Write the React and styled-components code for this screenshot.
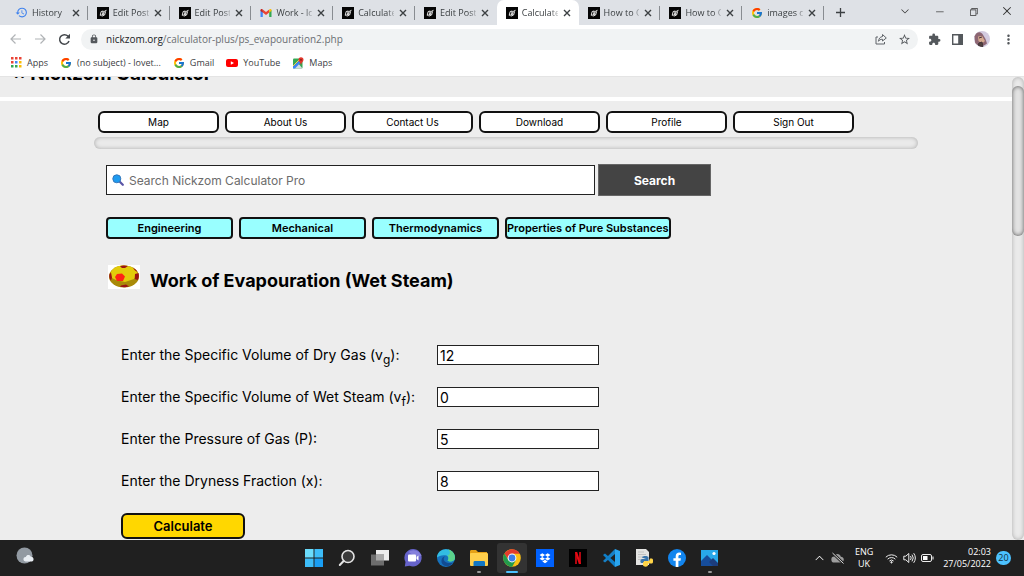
import React from 'react'
import styled, { createGlobalStyle } from 'styled-components'
import { MdExtension, MdHistory, MdLock, MdMoreVert, MdStarBorder } from 'react-icons/md'
import { FcGoogle } from 'react-icons/fc'
import { VscChromeMinimize, VscChromeRestore, VscChromeClose, VscChevronDown, VscChevronUp } from 'react-icons/vsc'

const tabs = [
    { icon: 'history', title: 'History' },
    { icon: 'nickzom', title: 'Edit Post' },
    { icon: 'nickzom', title: 'Edit Post' },
    { icon: 'gmail', title: 'Work - lo' },
    { icon: 'nickzom', title: 'Calculate' },
    { icon: 'nickzom', title: 'Edit Post' },
    { icon: 'nickzom', title: 'Calculate', active: true },
    { icon: 'nickzom', title: 'How to C' },
    { icon: 'nickzom', title: 'How to C' },
    { icon: 'google', title: 'images o' },
]

const bookmarks = [
    { icon: 'apps', title: 'Apps' },
    { icon: 'google', title: '(no subject) - lovet...' },
    { icon: 'google', title: 'Gmail' },
    { icon: 'youtube', title: 'YouTube' },
    { icon: 'maps', title: 'Maps' },
]

const menu = ['Map', 'About Us', 'Contact Us', 'Download', 'Profile', 'Sign Out']
const crumbs = ['Engineering', 'Mechanical', 'Thermodynamics', 'Properties of Pure Substances']

const fields = [
    { id: 'vg', label: <>Enter the Specific Volume of Dry Gas (v<sub>g</sub>):</>, value: '12' },
    { id: 'vf', label: <>Enter the Specific Volume of Wet Steam (v<sub>f</sub>):</>, value: '0' },
    { id: 'p', label: 'Enter the Pressure of Gas (P):', value: '5' },
    { id: 'x', label: 'Enter the Dryness Fraction (x):', value: '8' },
]

const apps = [
    { name: 'Start', icon: 'windows' },
    { name: 'Search', icon: 'search' },
    { name: 'Task View', icon: 'taskview' },
    { name: 'Chat', icon: 'chat' },
    { name: 'Edge', icon: 'edge' },
    { name: 'File Explorer', icon: 'explorer', state: 'open' },
    { name: 'Chrome', icon: 'chrome', state: 'active' },
    { name: 'Dropbox', icon: 'dropbox' },
    { name: 'Netflix', icon: 'netflix' },
    { name: 'Visual Studio Code', icon: 'vscode' },
    { name: 'Python', icon: 'python' },
    { name: 'Facebook', icon: 'facebook' },
    { name: 'Photos', icon: 'photos', state: 'open' },
]

const SmallIcon = ({ name }) => {
    switch (name) {
        case 'history':
            return <MdHistory size={13} color="#3f82ee" />
        case 'google':
            return <FcGoogle size={12} />
        case 'nickzom':
            return (
                <svg width="12" height="12" viewBox="0 0 12 12">
                    <rect width="12" height="12" fill="#050505" />
                    <path d="M3.2 8.3 4.2 4.5 6.3 4 5.3 8ZM6.2 8 7.3 4.3 9.5 3.3M4.8 9.2 7.6 8 8.6 4.4" fill="none" stroke="#fff" strokeWidth="0.9" />
                </svg>
            )
        case 'gmail':
            return (
                <svg width="12" height="12" viewBox="0 0 12 12">
                    <path d="M.5 3v7h2.3V4.5Z" fill="#4285f4" />
                    <path d="M9.2 4.5V10h2.3V3Z" fill="#34a853" />
                    <path d="M2.8 2.6 6 5l3.2-2.4v3L6 8 2.8 5.6Z" fill="#ea4335" />
                    <path d="M.5 3.2C.5 1.7 1.8 1.6 2.8 2.4v3.2L.5 4Z" fill="#c5221f" />
                    <path d="M11.5 3.2c0-1.500-1.300-1.600-2.300-.8v3.200l2.300-1.600Z" fill="#fbbc04" />
                </svg>
            )
        case 'apps':
            return (
                <svg width="11" height="11" viewBox="0 0 11 11">
                    <path d="M0 0h2.500v2.500H0zM4 0h2.500v2.500H4zM8 0h2.500v2.500H8zM0 4h2.500v2.500H0z" fill="#ea4335" />
                    <path d="M4 4h2.500v2.500H4z" fill="#4285f4" />
                    <path d="M8 4h2.500v2.500H8zM8 8h2.500v2.500H8z" fill="#fbbc04" />
                    <path d="M0 8h2.500v2.500H0zM4 8h2.500v2.500H4z" fill="#34a853" />
                </svg>
            )
        case 'youtube':
            return (
                <svg width="12" height="12" viewBox="0 0 12 12">
                    <rect y="2" width="12" height="8" rx="2" fill="#f00" />
                    <path d="M4.8 4.2v3.600L8 6Z" fill="#fff" />
                </svg>
            )
        default:
            return (
                <svg width="12" height="12" viewBox="0 0 12 12">
                    <rect x="1" y="1.5" width="9.5" height="10" rx="1" fill="#34a853" />
                    <path d="M1.5 11.5 6 6l4.500 5.500Z" fill="#d8dce0" />
                    <path d="M1 9.5 9 2l1.500 1.500L3 11.500H1Z" fill="#4285f4" />
                    <path d="M1 9 8 2" stroke="#fbd04b" />
                    <path d="M9 .3a2.500 2.500 0 0 0-2.500 2.500C6.500 4.500 8.500 5.500 9 8c.5-2.500 2.500-3.500 2.500-5.200A2.500 2.500 0 0 0 9 .3Z" fill="#e5352b" />
                    <circle cx="9" cy="2.8" r=".9" fill="#7b1f16" />
                </svg>
            )
    }
}

const appArt = {
    windows: (
        <>
            <path d="M0 0h8.500v8.500H0z" fill="#6bdcfb" />
            <path d="M9.500 0H18v8.500H9.500zM0 9.500h8.500V18H0z" fill="#3dbdf8" />
            <path d="M9.500 9.500H18V18H9.500z" fill="#199ef3" />
        </>
    ),
    search: (
        <>
            <circle cx="10" cy="7.5" r="6" fill="#3b3b3b" stroke="#e4e4e4" strokeWidth="1.6" />
            <path d="M5.6 12 1.8 16" stroke="#e4e4e4" strokeWidth="2" strokeLinecap="round" />
        </>
    ),
    taskview: (
        <>
            <rect x="5" y="1" width="13" height="10.5" fill="#ededed" />
            <rect x="0" y="5.5" width="13" height="11" fill="#6d6d6d" />
            <rect x="5" y="5.5" width="8" height="6" fill="#a8a8a8" />
        </>
    ),
    chat: (
        <>
            <path d="M9 0a8.700 8.700 0 1 1-3.500 16.700L.8 17.500 1.500 13A8.700 8.700 0 0 1 9 0Z" fill="#6663ca" />
            <path d="M4.500 3A8.500 8.500 0 0 1 17.500 7L12 8Z" fill="#8580dc" />
            <rect x="4" y="5.5" width="8" height="7" rx="1" fill="#fff" />
            <path d="m12.500 8 2-1.500v5l-2-1.500Z" fill="#fff" />
        </>
    ),
    edge: (
        <>
            <circle cx="9" cy="9" r="9" fill="#1672bd" />
            <path d="M0 8.500C.5-2.500 17.500-2.500 18 8.800c0 4-5.500 4.600-7.400 2.600 1.500-1.900 1-4.900-2.400-5.200C4.500 5.900 1.500 7 0 8.500Z" fill="#32bce2" />
            <path d="M10.500.2C15 1 18 4.500 18 8.800c0 4-5.500 4.600-7.400 2.600 1.700-2.200.8-4-.6-4.800C14 5.500 13.500 2 10.500.2Z" fill="#5bd38b" />
            <path d="M8.200 7.500C5 9.500 7 15.500 16 13.800 12 19.500 4 17.500 4.500 11.500 4.700 9 6.500 7.600 8.200 7.500Z" fill="#124b91" />
        </>
    ),
    explorer: (
        <>
            <path d="M0 2.500C0 1.500.6 1 1.500 1H6l2 2h9v5H0Z" fill="#e5a116" />
            <rect y="4" width="18" height="13" rx="1" fill="#ffcf4b" />
            <path d="M3.500 17v-3.500c0-1 .5-1.500 1.500-1.500h8.500c1 0 1.500.5 1.500 1.500V17Z" fill="#1277c4" />
        </>
    ),
    chrome: (
        <>
            <circle cx="9" cy="9" r="8.8" fill="#fbc116" />
            <path d="M1.400 4.600a8.800 8.800 0 0 1 15.300.1H9L5.400 11Z" fill="#e33b2e" />
            <path d="M1.400 4.600A8.800 8.800 0 0 0 9.200 17.800L13 11 9 13l-3.600-2Z" fill="#229a4c" />
            <circle cx="9" cy="9" r="4.4" fill="#fff" />
            <circle cx="9" cy="9" r="3.4" fill="#3c7de8" />
        </>
    ),
    dropbox: (
        <>
            <rect width="18" height="18" fill="#0061fe" />
            <path d="m6.300 4.300 2.700 1.800-2.700 1.800-2.700-1.800Zm5.400 0 2.700 1.800-2.700 1.800L9 6.100ZM6.300 7.900 9 9.700l-2.700 1.800-2.700-1.800Zm5.400 0 2.700 1.800-2.700 1.800L9 9.700ZM9 10.700l2.700 1.800L9 14.300l-2.700-1.800Z" fill="#fff" />
        </>
    ),
    netflix: (
        <>
            <rect width="18" height="18" fill="#000" />
            <path d="M7 15V3M11 15V3" stroke="#b20710" strokeWidth="2" />
            <path d="M6 3h2.200l3.800 12H9.800Z" fill="#e50914" />
        </>
    ),
    vscode: (
        <>
            <path d="m13 0 5 2v14l-5 2Z" fill="#2aa5ee" />
            <path d="M13 0v5L3 13.500 1 12Z" fill="#1780c6" />
            <path d="M1 6l2-1.500L13 13v5Z" fill="#0f7fc9" />
        </>
    ),
    python: (
        <>
            <path d="M1 0h10l3 3v13H1Z" fill="#e4e4e2" />
            <path d="M3 3h6M3 5.500h8M3 8h5M3 10.500h3" stroke="#c2c2c2" />
            <path d="M7 8.500C7 6.500 13.500 6.500 13.500 8.500V12H9v2H6.500C5 14 5 10 7 10h4Z" fill="#3a75ab" />
            <path d="M17 9.500c1.800 1 1.500 5-.5 5H13V16c0 2.500-5 2-5 0v-2.500l1.500-1.500h4.500l1-2.500Z" fill="#ffd447" />
        </>
    ),
    facebook: (
        <>
            <circle cx="9" cy="9" r="9" fill="#1285ee" />
            <path d="M7.700 18v-6.200H5.400V9.200h2.300V7.300c0-2.500 1.500-3.700 3.500-3.700l1.800.2V6h-1.100c-1.200 0-1.500.6-1.500 1.400v1.800h2.500l-.4 2.600h-2.100V18Z" fill="#fff" />
        </>
    ),
    photos: (
        <>
            <rect y="1" width="17" height="16" fill="#28a8ea" />
            <path d="M0 12 6 6l11 11H0Z" fill="#164d9b" />
            <path d="m8 13 4-4 5 5v3h-5Z" fill="#1c3d7d" />
            <circle cx="13" cy="4.5" r="1.6" fill="#fff" />
        </>
    ),
}

const App = () => {
    return (
        <Desktop>
            <GlobalStyle />
            <TabStrip>
                <TabList>
                    {tabs.map((tab, i) => (
                        <Tab key={i} $active={tab.active} $divider={!tab.active && !tabs[i + 1]?.active}>
                            <SmallIcon name={tab.icon} />
                            <TabTitle>{tab.title}</TabTitle>
                            <TabButton aria-label="Close tab"><Cross /></TabButton>
                        </Tab>
                    ))}
                </TabList>
                <NewTab aria-label="New tab">
                    <svg width="11" height="11" viewBox="0 0 11 11"><path d="M5.500 1v9M1 5.500h9" stroke="#3c4043" strokeWidth="1.3" /></svg>
                </NewTab>
                <WindowControls>
                    <IconButton aria-label="Search tabs"><VscChevronDown size={12} /></IconButton>
                    <IconButton aria-label="Minimize"><VscChromeMinimize size={11} /></IconButton>
                    <IconButton aria-label="Restore"><VscChromeRestore size={11} /></IconButton>
                    <IconButton aria-label="Close"><VscChromeClose size={12} /></IconButton>
                </WindowControls>
            </TabStrip>

            <Toolbar>
                <NavButtons>
                    <IconButton aria-label="Back"><Arrow /></IconButton>
                    <IconButton aria-label="Forward"><Arrow forward /></IconButton>
                    <IconButton aria-label="Reload">
                        <svg width="13" height="13" viewBox="0 0 13 13">
                            <path d="M11 8A4.800 4.800 0 1 1 9.900 3.100L11 4.200" fill="none" stroke="#45494d" strokeWidth="1.5" />
                            <path d="M12 .8v4.700H7.300Z" fill="#45494d" />
                        </svg>
                    </IconButton>
                </NavButtons>
                <AddressBar>
                    <MdLock size={10} />
                    <Address href="#">nickzom.org<span>/calculator-plus/ps_evapouration2.php</span></Address>
                    <IconButton aria-label="Share">
                        <svg width="12" height="12" viewBox="0 0 12 12" fill="none" stroke="#5f6368">
                            <path d="M3 4H1v7h8.500V9" />
                            <path d="M7.500 1.500 11.300 5 7.500 8V6.300C5.500 6.200 4.300 7 3.500 8.300 3.800 5.500 5 4 7.500 3.500Z" />
                        </svg>
                    </IconButton>
                    <IconButton aria-label="Bookmark this page"><MdStarBorder size={13} /></IconButton>
                </AddressBar>
                <Extensions>
                    <IconButton aria-label="Extensions"><MdExtension size={13} /></IconButton>
                    <IconButton aria-label="Side panel">
                        <svg width="11" height="11" viewBox="0 0 11 11"><path d="M0 0h11v11H0Zm1.400 1.400v8.200h4.800V1.400Z" fill="#54585c" fillRule="evenodd" /></svg>
                    </IconButton>
                    <IconButton aria-label="Profile">
                        <svg width="16" height="16" viewBox="0 0 16 16">
                            <circle cx="8" cy="8" r="8" fill="#d3cbe0" />
                            <path d="M.5 5.500C2 1 6 0 8.500 3l3 5 1.500 4.500A8 8 0 0 1 1.200 12Z" fill="#8d6672" />
                            <path d="M4 5.500 8 5l3 5-3 2.500L4.500 10Z" fill="#d6aa90" />
                            <path d="m5 12 3-1 1 4.500a8 8 0 0 1-5-1.500ZM5 7l3-1" fill="#51413f" stroke="#43353a" />
                        </svg>
                    </IconButton>
                    <IconButton aria-label="Menu"><MdMoreVert size={15} /></IconButton>
                </Extensions>
            </Toolbar>

            <Bookmarks>
                {bookmarks.map((mark) => (
                    <Bookmark key={mark.title} href="#"><SmallIcon name={mark.icon} />{mark.title}</Bookmark>
                ))}
            </Bookmarks>

            <Viewport>
                <Page>
                    <SiteHeader><h1>:: Nickzom Calculator</h1></SiteHeader>
                    <Menu>
                        {menu.map((item) => <MenuButton key={item}>{item}</MenuButton>)}
                    </Menu>
                    <Groove />
                    <Content>
                        <SearchForm onSubmit={(e) => e.preventDefault()}>
                            <SearchBox>
                                <svg width="12" height="12" viewBox="0 0 12 12">
                                    <path d="m7.500 7.500 3.300 3.300" stroke="#5b55a6" strokeWidth="2.2" strokeLinecap="round" />
                                    <circle cx="4.8" cy="4.8" r="4" fill="#1d9bf0" stroke="#3577bb" />
                                </svg>
                                <input type="search" aria-label="Search" placeholder="Search Nickzom Calculator Pro" />
                            </SearchBox>
                            <SearchButton type="submit">Search</SearchButton>
                        </SearchForm>
                        <Crumbs>
                            {crumbs.map((crumb) => <Crumb key={crumb}>{crumb}</Crumb>)}
                        </Crumbs>
                        <Title>
                            <svg width="32" height="24" viewBox="0 0 32 24">
                                <rect width="32" height="24" fill="#fff" />
                                <ellipse cx="16" cy="11.5" rx="15" ry="11" fill="#a98a08" />
                                <path d="M2 9C4 3 9 .5 16 .5S28 4 30 9l-4 5-9 3-9-2-6-3Z" fill="#e3cb0a" />
                                <path d="M12 1.200C14 .3 18 .3 20 1l-3 2h-3ZM25 3c2.500 1 4 2.500 4.500 4L27 5.500ZM1.500 9 3 7.500l1 5-1 3C1.500 14 .8 11.500 1.500 9ZM27 9l3.500-1c.8 3 .3 5-.8 7l-3-1ZM13 20.500l5-1 3 2c-4 1-6 .8-9 .2Z" fill="#9b1414" />
                                <path d="m7 12 2-3 5-.5 3 3-2 4.500H9Z" fill="#ff2315" />
                            </svg>
                            <h2>Work of Evapouration (Wet Steam)</h2>
                        </Title>
                        <Form onSubmit={(e) => e.preventDefault()}>
                            {fields.map((field) => (
                                <Field key={field.id}>
                                    <label htmlFor={field.id}>{field.label}</label>
                                    <input id={field.id} type="text" defaultValue={field.value} />
                                </Field>
                            ))}
                            <Calculate type="submit">Calculate</Calculate>
                        </Form>
                    </Content>
                </Page>
                <ScrollTrack><ScrollThumb /></ScrollTrack>
            </Viewport>

            <Taskbar>
                <Weather aria-label="Weather">
                    <svg width="18" height="18" viewBox="0 0 18 18">
                        <circle cx="8.5" cy="8.5" r="8" fill="#929aa2" />
                        <path d="M9.500 14.500a2 2 0 0 1 .3-4.500c.8-3 4.500-2.500 5-.3 3.200-.4 3.700 4.300 1 4.800Z" fill="#e9eef3" />
                    </svg>
                </Weather>
                <Apps>
                    {apps.map((app) => (
                        <AppButton key={app.name} aria-label={app.name} $state={app.state}>
                            <svg width="18" height="18" viewBox="0 0 18 18">{appArt[app.icon]}</svg>
                        </AppButton>
                    ))}
                </Apps>
                <Tray>
                    <VscChevronUp size={13} />
                    <svg width="14" height="12" viewBox="0 0 14 12">
                        <path d="M3.500 10.500a3 3 0 0 1-.3-6C4.500 1 9 1.500 9.800 4.800c3.500 0 4.200 5 .7 5.700Z" fill="#9d9d9d" />
                        <path d="m1.500 1 11 10.500" stroke="#202020" strokeWidth="2.5" />
                        <path d="m1.500 1 11 10.500" stroke="#ddd" />
                    </svg>
                    <Language><span>ENG</span><span>UK</span></Language>
                    <svg width="13" height="11" viewBox="0 0 13 11" fill="none" stroke="#eee">
                        <path d="M.8 4.200a8 8 0 0 1 11.400 0M2.600 6.200a5.500 5.500 0 0 1 7.800 0M4.400 8a3 3 0 0 1 4.200 0" />
                        <circle cx="6.5" cy="9.3" r=".7" fill="#eee" />
                    </svg>
                    <svg width="13" height="12" viewBox="0 0 13 12" fill="none" stroke="#eee">
                        <path d="M.8 4.200h2L5.800 1.500v9L2.800 7.800h-2ZM7.500 4q1.400 2 0 4M9 2.600q2.500 3.400 0 6.800M10.700 1.200q3.300 4.800 0 9.600" />
                    </svg>
                    <svg width="13" height="10" viewBox="0 0 13 10">
                        <rect x=".5" y="1.5" width="10" height="7" rx="1.5" fill="none" stroke="#eee" />
                        <path d="M2 3h4.500v4H2zM11.500 3.500h1v3h-1z" fill="#fff" />
                    </svg>
                    <Clock><span>02:03</span><span>27/05/2022</span></Clock>
                    <Badge>20</Badge>
                </Tray>
            </Taskbar>
        </Desktop>
    )
}

const Cross = () => (
    <svg width="8" height="8" viewBox="0 0 8 8"><path d="m1 1 6 6m0-6L1 7" stroke="#3c4043" strokeWidth="1.4" /></svg>
)

const Arrow = ({ forward }) => (
    <svg width="12" height="12" viewBox="0 0 12 12">
        <path d={forward ? 'M1 6h10M6.500 1.500 11 6l-4.500 4.500' : 'M11 6H1m4.500-4.500L1 6l4.500 4.500'} fill="none" stroke="#b0b3b6" strokeWidth="1.2" />
    </svg>
)

const GlobalStyle = createGlobalStyle`
  * {
    box-sizing: border-box;
  }
  body {
    margin: 0;
    font-family: "Open Sans", sans-serif;
    font-size: 9px;
    color: #3c4043;
  }
  button, input {
    font-family: inherit;
  }
  svg {
    display: block;
    flex-shrink: 0;
  }
`;

const Desktop = styled.div`
  display: flex;
  flex-direction: column;
  height: 100vh;
  overflow: hidden;
  background: #fff;
`;

const IconButton = styled.button`
  display: flex;
  align-items: center;
  justify-content: center;
  padding: 0;
  border: 0;
  background: none;
  color: #54585c;
`;

const TabStrip = styled.div`
  display: flex;
  flex-shrink: 0;
  height: 25px;
  background: #dee1e6;
`;

const TabList = styled.div`
  display: flex;
  flex: 1;
  min-width: 0;
  padding-left: 6px;
`;

const Tab = styled.div`
  position: relative;
  display: flex;
  align-items: center;
  flex: 1;
  min-width: 0;
  gap: 4px;
  padding: 0 7px 0 9px;
  border-radius: 7px 7px 0 0;
  background: ${(props) => (props.$active ? '#fff' : 'none')};

  &::after {
    content: '';
    position: absolute;
    right: 0;
    top: 6px;
    width: 1px;
    height: 14px;
    background: ${(props) => (props.$divider ? '#888c91' : 'none')};
  }
`;

const TabTitle = styled.span`
  flex: 1;
  overflow: hidden;
  white-space: nowrap;
  mask-image: linear-gradient(to right, #000 80%, #0004);
`;

const TabButton = styled(IconButton)`
  width: 10px;
  height: 12px;
`;

const NewTab = styled(IconButton)`
  width: 32px;
`;

const WindowControls = styled.div`
  display: flex;
  flex-shrink: 0;
  padding: 0 0 3px 32px;

  button {
    width: 34px;
    color: #333;
  }
`;

const Toolbar = styled.div`
  display: flex;
  align-items: center;
  flex-shrink: 0;
  height: 28px;
`;

const NavButtons = styled.div`
  display: flex;
  gap: 12px;
  padding: 0 10px;
`;

const AddressBar = styled.div`
  display: flex;
  align-items: center;
  flex: 1;
  gap: 7px;
  height: 21px;
  padding: 0 7px 0 8px;
  border-radius: 11px;
  background: #f1f3f4;
  color: #54585c;

  button + button {
    margin-left: 4px;
  }
`;

const Address = styled.a`
  flex: 1;
  font-size: 10px;
  text-decoration: none;
  color: #202124;

  span {
    color: #6a6e72;
  }
`;

const Extensions = styled.div`
  display: flex;
  align-items: center;
  gap: 11px;
  padding: 0 8px 0 10px;
`;

const Bookmarks = styled.nav`
  display: flex;
  flex-shrink: 0;
  gap: 12px;
  height: 23px;
  padding: 0 11px 4px;
`;

const Bookmark = styled.a`
  display: flex;
  align-items: center;
  gap: 5px;
  text-decoration: none;
  color: #3c4043;
`;

const Viewport = styled.div`
  display: flex;
  flex: 1;
  min-height: 0;
  border-top: 1px solid #e4e4e4;
  background: #ededed;
`;

const Page = styled.main`
  flex: 1;
  overflow: hidden;
  font-family: Inter, sans-serif;
  color: #000;
`;

const SiteHeader = styled.header`
  display: flex;
  align-items: flex-end;
  height: 24px;
  padding: 0 13px 13px;
  border-bottom: 4px solid #fff;
  overflow: hidden;

  h1 {
    margin: 0;
    font-size: 19px;
    line-height: 20px;
  }
`;

const Menu = styled.nav`
  display: flex;
  gap: 6px;
  padding: 10px 98px 4px;
`;

const MenuButton = styled.button`
  width: 121px;
  height: 22px;
  padding: 0;
  border: 2px solid #111;
  border-radius: 6px;
  background: #fff;
  font-size: 10px;
  color: #000;
`;

const Groove = styled.div`
  height: 12px;
  margin: 0 94px;
  border-radius: 6px;
  background: #eaeaea;
  box-shadow: inset 0 0 4px #aaa;
`;

const Content = styled.div`
  padding: 15px 106px 0;
`;

const SearchForm = styled.form`
  display: flex;
  align-items: center;
  gap: 3px;
`;

const SearchBox = styled.div`
  display: flex;
  align-items: center;
  gap: 5px;
  width: 489px;
  height: 30px;
  padding: 0 5px;
  border: 1px solid #222;
  background: #fff;

  input {
    flex: 1;
    padding: 0;
    border: 0;
    outline: 0;
    background: none;
    font-size: 12px;
  }
  input::placeholder {
    color: #6c6c6c;
  }
`;

const SearchButton = styled.button`
  width: 113px;
  height: 32px;
  border: 1px solid #666;
  background: #444;
  font-size: 12px;
  font-weight: 700;
  color: #fff;
`;

const Crumbs = styled.nav`
  display: flex;
  gap: 6px;
  padding-top: 21px;
`;

const Crumb = styled.button`
  min-width: 127px;
  height: 22px;
  padding: 0;
  border: 2px solid #111;
  border-radius: 4px;
  background: #9ff;
  font-size: 11px;
  font-weight: 600;
  color: #000;
`;

const Title = styled.div`
  display: flex;
  gap: 10px;
  padding: 26px 2px 0;

  h2 {
    margin: 0;
    padding-top: 4px;
    font-size: 18px;
    font-weight: 700;
    line-height: 24px;
  }
`;

const Form = styled.form`
  display: flex;
  flex-direction: column;
  gap: 22px;
  padding: 52px 15px 0;
`;

const Field = styled.div`
  display: flex;
  align-items: center;
  height: 20px;
  font-size: 14px;

  label {
    width: 316px;
    line-height: 16px;
    white-space: nowrap;
  }
  sub {
    font-size: 12px;
    line-height: 0;
  }
  input {
    width: 162px;
    height: 20px;
    padding: 0 2px;
    border: 1px solid #222;
    border-radius: 0;
    font-size: 14px;
  }
`;

const Calculate = styled.button`
  width: 124px;
  height: 26px;
  border: 2px solid #111;
  border-radius: 6px;
  background: #ffd700;
  font-size: 13px;
  font-weight: 600;
  color: #000;
`;

const ScrollTrack = styled.div`
  width: 12px;
  padding-top: 9px;
  border-radius: 6px;
  background: #eaeaea;
  box-shadow: inset 0 0 4px #aaa;
`;

const ScrollThumb = styled.div`
  height: 33%;
  border-radius: 6px;
  background: #e2e2e2;
  box-shadow: inset 0 0 4px #555;
`;

const Taskbar = styled.footer`
  display: grid;
  grid-template-columns: 1fr auto 1fr;
  align-items: center;
  flex-shrink: 0;
  height: 36px;
  background: #202020;
  color: #fff;
`;

const Weather = styled(IconButton)`
  justify-self: start;
  padding: 0 0 4px 16px;
`;

const Apps = styled.div`
  display: flex;
  gap: 3px;
`;

const AppButton = styled(IconButton)`
  position: relative;
  width: 30px;
  height: 30px;
  border-radius: 3px;
  background: ${(props) => (props.$state === 'active' ? '#333' : 'none')};

  &::after {
    content: '';
    position: absolute;
    bottom: 0;
    width: ${(props) => (props.$state === 'active' ? '12px' : '4px')};
    height: 2px;
    border-radius: 1px;
    background: ${(props) => (props.$state === 'active' ? '#4cc2ff' : props.$state ? '#999' : 'none')};
  }
`;

const Tray = styled.div`
  display: flex;
  align-items: center;
  justify-content: flex-end;
  gap: 5px;
  padding-right: 13px;
`;

const Stack = styled.div`
  display: flex;
  flex-direction: column;
  line-height: 12px;
`;

const Language = styled(Stack)`
  align-items: center;
  padding: 0 7px 0 5px;
`;

const Clock = styled(Stack)`
  align-items: flex-end;
  padding-left: 4px;
`;

const Badge = styled.span`
  width: 15px;
  border-radius: 7px;
  background: #4cc2ff;
  line-height: 14px;
  text-align: center;
  color: #10303f;
`;

export default App
